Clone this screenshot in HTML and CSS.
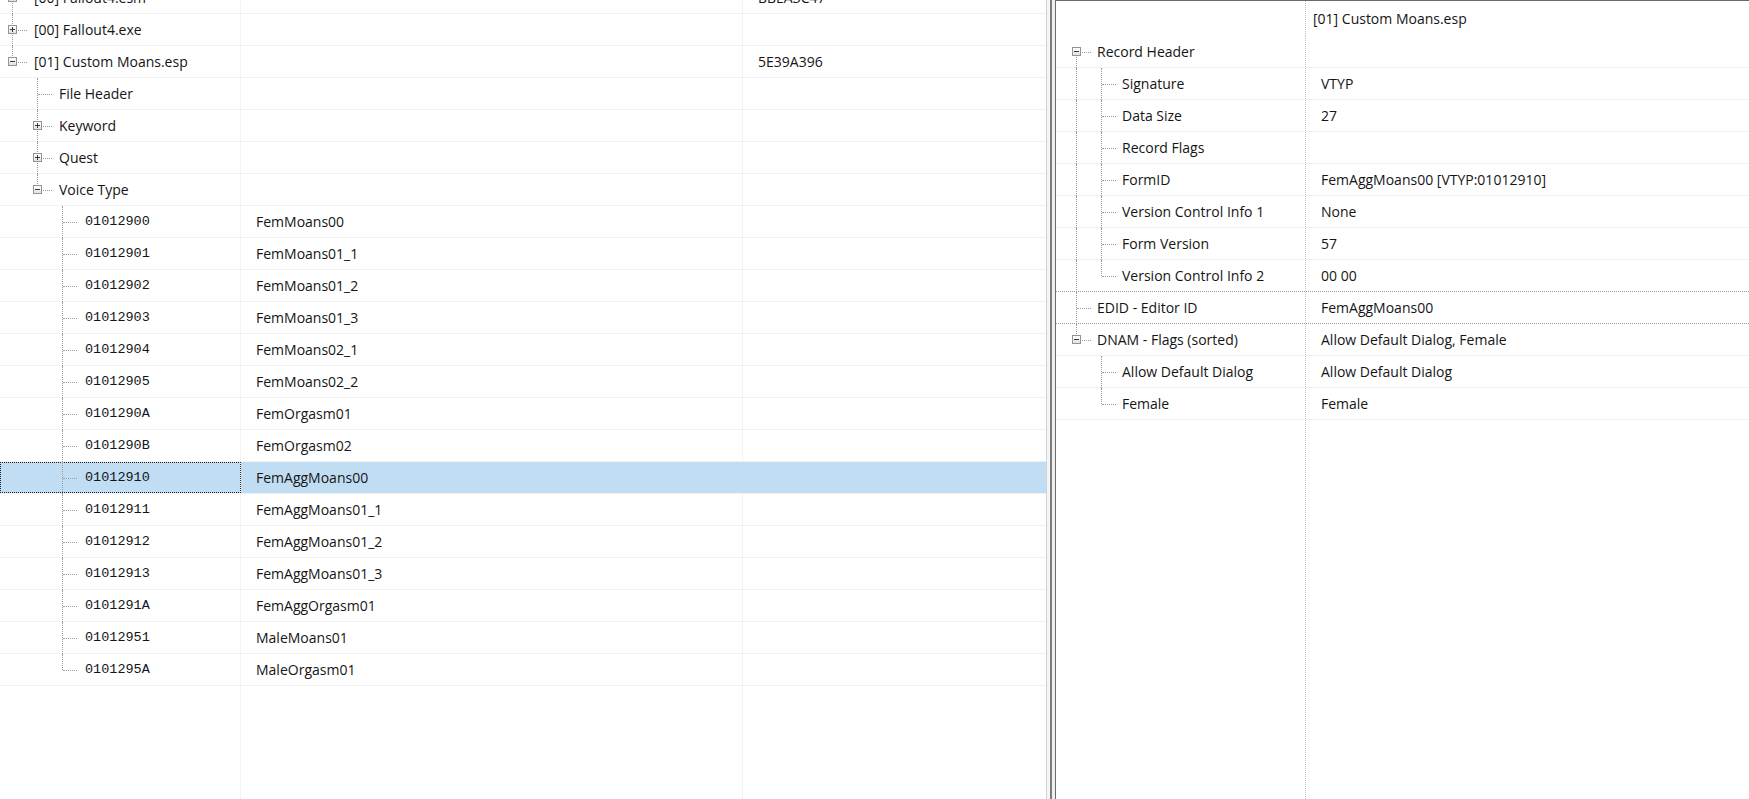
FILE: index.html
```html
<!DOCTYPE html>
<html lang="en">
<head>
  <meta charset="UTF-8" />
  <title>FO4Edit - Custom Moans.esp</title>
  <link rel="stylesheet" href="styles.css">
</head>
<body>
  <div class="app">
    <section class="nav-pane">
      <div class="rows">
        <div class="row">
          <div class="c1"><span class="g tee"><span class="exp plus"></span></span><span class="label">[00] Fallout4.esm</span></div>
          <div class="c2"></div>
          <div class="c3">BBEA3C47</div>
        </div>
        <div class="row">
          <div class="c1"><span class="g tee"><span class="exp plus"></span></span><span class="label">[00] Fallout4.exe</span></div>
          <div class="c2"></div>
          <div class="c3"></div>
        </div>
        <div class="row">
          <div class="c1"><span class="g elbow"><span class="exp"></span></span><span class="label">[01] Custom Moans.esp</span></div>
          <div class="c2"></div>
          <div class="c3">5E39A396</div>
        </div>
        <div class="row">
          <div class="c1"><span class="g"></span><span class="g tee"></span><span class="label">File Header</span></div>
          <div class="c2"></div>
          <div class="c3"></div>
        </div>
        <div class="row">
          <div class="c1"><span class="g"></span><span class="g tee"><span class="exp plus"></span></span><span class="label">Keyword</span></div>
          <div class="c2"></div>
          <div class="c3"></div>
        </div>
        <div class="row">
          <div class="c1"><span class="g"></span><span class="g tee"><span class="exp plus"></span></span><span class="label">Quest</span></div>
          <div class="c2"></div>
          <div class="c3"></div>
        </div>
        <div class="row">
          <div class="c1"><span class="g"></span><span class="g elbow"><span class="exp"></span></span><span class="label">Voice Type</span></div>
          <div class="c2"></div>
          <div class="c3"></div>
        </div>
        <div class="row">
          <div class="c1"><span class="g"></span><span class="g"></span><span class="g tee"></span><span class="label mono">01012900</span></div>
          <div class="c2">FemMoans00</div>
          <div class="c3"></div>
        </div>
        <div class="row">
          <div class="c1"><span class="g"></span><span class="g"></span><span class="g tee"></span><span class="label mono">01012901</span></div>
          <div class="c2">FemMoans01_1</div>
          <div class="c3"></div>
        </div>
        <div class="row">
          <div class="c1"><span class="g"></span><span class="g"></span><span class="g tee"></span><span class="label mono">01012902</span></div>
          <div class="c2">FemMoans01_2</div>
          <div class="c3"></div>
        </div>
        <div class="row">
          <div class="c1"><span class="g"></span><span class="g"></span><span class="g tee"></span><span class="label mono">01012903</span></div>
          <div class="c2">FemMoans01_3</div>
          <div class="c3"></div>
        </div>
        <div class="row">
          <div class="c1"><span class="g"></span><span class="g"></span><span class="g tee"></span><span class="label mono">01012904</span></div>
          <div class="c2">FemMoans02_1</div>
          <div class="c3"></div>
        </div>
        <div class="row">
          <div class="c1"><span class="g"></span><span class="g"></span><span class="g tee"></span><span class="label mono">01012905</span></div>
          <div class="c2">FemMoans02_2</div>
          <div class="c3"></div>
        </div>
        <div class="row">
          <div class="c1"><span class="g"></span><span class="g"></span><span class="g tee"></span><span class="label mono">0101290A</span></div>
          <div class="c2">FemOrgasm01</div>
          <div class="c3"></div>
        </div>
        <div class="row">
          <div class="c1"><span class="g"></span><span class="g"></span><span class="g tee"></span><span class="label mono">0101290B</span></div>
          <div class="c2">FemOrgasm02</div>
          <div class="c3"></div>
        </div>
        <div class="row selected">
          <div class="c1"><span class="g"></span><span class="g"></span><span class="g tee"></span><span class="label mono">01012910</span></div>
          <div class="c2">FemAggMoans00</div>
          <div class="c3"></div>
        </div>
        <div class="row">
          <div class="c1"><span class="g"></span><span class="g"></span><span class="g tee"></span><span class="label mono">01012911</span></div>
          <div class="c2">FemAggMoans01_1</div>
          <div class="c3"></div>
        </div>
        <div class="row">
          <div class="c1"><span class="g"></span><span class="g"></span><span class="g tee"></span><span class="label mono">01012912</span></div>
          <div class="c2">FemAggMoans01_2</div>
          <div class="c3"></div>
        </div>
        <div class="row">
          <div class="c1"><span class="g"></span><span class="g"></span><span class="g tee"></span><span class="label mono">01012913</span></div>
          <div class="c2">FemAggMoans01_3</div>
          <div class="c3"></div>
        </div>
        <div class="row">
          <div class="c1"><span class="g"></span><span class="g"></span><span class="g tee"></span><span class="label mono">0101291A</span></div>
          <div class="c2">FemAggOrgasm01</div>
          <div class="c3"></div>
        </div>
        <div class="row">
          <div class="c1"><span class="g"></span><span class="g"></span><span class="g tee"></span><span class="label mono">01012951</span></div>
          <div class="c2">MaleMoans01</div>
          <div class="c3"></div>
        </div>
        <div class="row">
          <div class="c1"><span class="g"></span><span class="g"></span><span class="g elbow"></span><span class="label mono">0101295A</span></div>
          <div class="c2">MaleOrgasm01</div>
          <div class="c3"></div>
        </div>
        <div class="row rest">
          <div class="c1"></div>
          <div class="c2"></div>
          <div class="c3"></div>
        </div>
      </div>
    </section>

    <div class="splitter"></div>

    <section class="view-pane">
      <div class="vrow vhead">
        <div class="c1"></div>
        <div class="c2 title">[01] Custom Moans.esp</div>
      </div>
      <div class="vrow">
        <div class="c1"><span class="g down"><span class="exp"></span></span><span class="label">Record Header</span></div>
        <div class="c2"></div>
      </div>
      <div class="vrow">
        <div class="c1"><span class="g pipe"></span><span class="g tee"></span><span class="label">Signature</span></div>
        <div class="c2">VTYP</div>
      </div>
      <div class="vrow">
        <div class="c1"><span class="g pipe"></span><span class="g tee"></span><span class="label">Data Size</span></div>
        <div class="c2">27</div>
      </div>
      <div class="vrow">
        <div class="c1"><span class="g pipe"></span><span class="g tee"></span><span class="label">Record Flags</span></div>
        <div class="c2"></div>
      </div>
      <div class="vrow">
        <div class="c1"><span class="g pipe"></span><span class="g tee"></span><span class="label">FormID</span></div>
        <div class="c2">FemAggMoans00 [VTYP:01012910]</div>
      </div>
      <div class="vrow">
        <div class="c1"><span class="g pipe"></span><span class="g tee"></span><span class="label">Version Control Info 1</span></div>
        <div class="c2">None</div>
      </div>
      <div class="vrow">
        <div class="c1"><span class="g pipe"></span><span class="g tee"></span><span class="label">Form Version</span></div>
        <div class="c2">57</div>
      </div>
      <div class="vrow dotted">
        <div class="c1"><span class="g pipe"></span><span class="g elbow"></span><span class="label">Version Control Info 2</span></div>
        <div class="c2">00 00</div>
      </div>
      <div class="vrow dotted">
        <div class="c1"><span class="g tee"></span><span class="label">EDID - Editor ID</span></div>
        <div class="c2">FemAggMoans00</div>
      </div>
      <div class="vrow">
        <div class="c1"><span class="g elbow"><span class="exp"></span></span><span class="label">DNAM - Flags (sorted)</span></div>
        <div class="c2">Allow Default Dialog, Female</div>
      </div>
      <div class="vrow">
        <div class="c1"><span class="g"></span><span class="g tee"></span><span class="label">Allow Default Dialog</span></div>
        <div class="c2">Allow Default Dialog</div>
      </div>
      <div class="vrow">
        <div class="c1"><span class="g"></span><span class="g elbow"></span><span class="label">Female</span></div>
        <div class="c2">Female</div>
      </div>
      <div class="vrow rest">
        <div class="c1"></div>
        <div class="c2"></div>
      </div>
    </section>
  </div>
</body>
</html>
```

FILE: styles.css
```css
html, body {
  margin: 0;
  height: 100%;
  overflow: hidden;
  background: #fff;
}
body {
  font-family: "Open Sans", "Noto Sans", sans-serif;
  font-size: 14px;
  color: #151515;
}
.app {
  display: flex;
  height: 799px;
}

/* left: record tree */
.nav-pane {
  width: 1046px;
  flex: none;
  border-right: 1px solid #d2d2d2;
  overflow: hidden;
  display: flex;
  flex-direction: column;
}
.rows {
  margin-top: -18px;
  flex: 1;
  display: flex;
  flex-direction: column;
}
.row {
  display: grid;
  grid-template-columns: 241px 502px 1fr;
  height: 31px;
  border-bottom: 1px solid #f1f1f1;
  flex: none;
}
.row.rest {
  flex: 1;
  border-bottom: none;
}
.row > div {
  display: flex;
  align-items: center;
  white-space: nowrap;
}
.row .c1,
.row .c2 {
  border-right: 1px solid #f3f3f3;
}
.row .c1 {
  align-items: stretch;
}
.row .c2,
.row .c3 {
  padding-left: 15px;
}
.row.selected > div {
  background: #c1ddf3;
}
.row.selected .c1 {
  outline: 1px dotted #222;
  outline-offset: -1px;
  border-right-color: #fff;
}
.row.selected .c2 {
  border-right-color: #c1ddf3;
}

/* tree guides */
.g {
  position: relative;
  flex: none;
  width: 25px;
  display: flex;
  align-items: center;
}
.g.tee,
.g.elbow,
.g.down {
  width: 29px;
}
.g.pipe::before,
.g.tee::before,
.g.elbow::before,
.g.down::before {
  content: "";
  position: absolute;
  left: 12px;
  top: 0;
  bottom: -1px;
  border-left: 1px dotted #9c9c9c;
}
.g.elbow::before {
  bottom: 50%;
}
.g.down::before {
  top: 50%;
}
.g.tee::after,
.g.elbow::after,
.g.down::after {
  content: "";
  position: absolute;
  left: 13px;
  right: 2px;
  top: 50%;
  border-top: 1px dotted #9c9c9c;
}
.exp {
  position: relative;
  z-index: 1;
  width: 9px;
  height: 9px;
  box-sizing: border-box;
  margin-left: 8px;
  border: 1px solid #949494;
  background: linear-gradient(#ffffff, #e2e2e2);
}
.exp::before {
  content: "";
  position: absolute;
  left: 1px;
  right: 1px;
  top: 3px;
  height: 1px;
  background: #3a3a3a;
}
.exp.plus::after {
  content: "";
  position: absolute;
  top: 1px;
  bottom: 1px;
  left: 3px;
  width: 1px;
  background: #3a3a3a;
}
.label {
  display: flex;
  align-items: center;
  padding-left: 5px;
}
.mono {
  font-family: "Liberation Mono", "DejaVu Sans Mono", monospace;
  font-size: 13.5px;
  padding-left: 6px;
}

/* splitter */
.splitter {
  flex: none;
  width: 2px;
  border-left: 3px solid #f6f6f6;
  border-right: 3px solid #efefef;
  background: #7c7c7c;
}

/* right: record view */
.view-pane {
  flex: 1;
  border-left: 1px solid #6a6a6a;
  border-top: 1px solid #6a6a6a;
  display: flex;
  flex-direction: column;
  overflow: hidden;
}
.vrow {
  display: grid;
  grid-template-columns: 250px 1fr;
  height: 31px;
  border-bottom: 1px solid #efefef;
  flex: none;
}
.vrow.vhead {
  height: 35px;
  border-bottom: none;
}
.vrow.dotted {
  border-bottom: 1px dotted #9c9c9c;
}
.vrow.rest {
  flex: 1;
  border-bottom: none;
}
.vrow > div {
  display: flex;
  align-items: center;
  white-space: nowrap;
}
.vrow .c1 {
  align-items: stretch;
  padding-left: 8px;
  border-right: 1px dotted #c4c4c4;
}
.vrow .c1 .label {
  padding-left: 4px;
}
.vrow .c2 {
  padding-left: 15px;
}
.vrow .c2.title {
  padding-left: 7px;
}
```
